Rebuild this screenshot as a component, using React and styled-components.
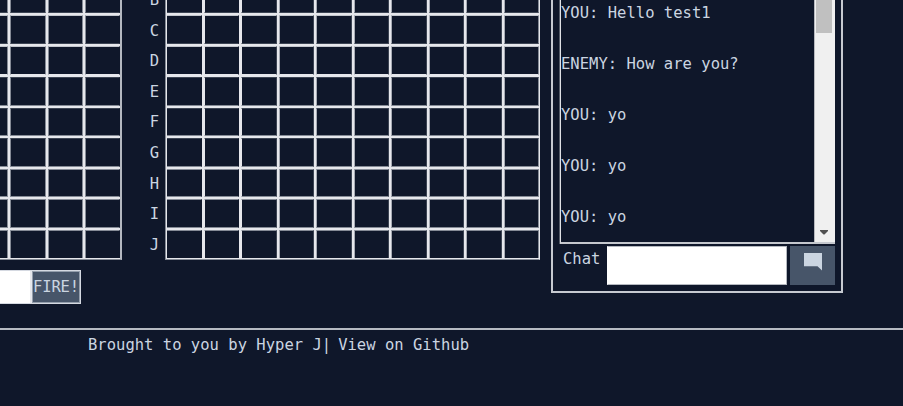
import React from "react";
import styled, { createGlobalStyle } from "styled-components";

const line = "#e6e7ec";
const bright = "#c3c6cd";
const soft = "#858b96";
const faint = "#3c4453";
const night = "#0f172a";

const GlobalStyle = createGlobalStyle`
  * { box-sizing: border-box; }
  body { margin: 0; background: ${night}; overflow: hidden; }
`;

const Page = styled.div`
  width: 903px;
  height: 406px;
  overflow: hidden;
  background: ${night};
  color: #cbd5e1;
  font: 15.5px/26px "DejaVu Sans Mono", monospace;
  letter-spacing: 0.02px;
  display: flex;
  flex-direction: column;
`;

const Game = styled.main`
  height: 328px;
  display: flex;
  align-items: flex-start;
`;

const OwnSide = styled.section`
  width: 122px;
`;

const Board = styled.div`
  display: grid;
  grid-template-columns: ${(p) => p.$columns.join("px ")}px;
  grid-template-rows: 13px 29px 29px 29px 28px 29px 28px 29px 28px;
  gap: 2px;
  width: ${(p) => p.$width}px;
  height: 260px;
  padding-bottom: 1px;
  background: ${line};
  border-right: 2px solid #b4b8c0;
  border-bottom: 1px solid ${soft};
`;

const Cell = styled.div`
  background: ${night};
  border: 0 solid;
  border-width: ${(p) => `${p.$first ? 0 : 1}px 1px ${p.$last ? 0 : 1}px ${p.$start ? 0 : 1}px`};
  border-top-color: ${(p) => p.$top};
  border-bottom-color: ${(p) => p.$bottom};
  border-right-color: ${(p) => p.$right};
  border-left-color: ${(p) => p.$left};
`;

const FireBar = styled.form`
  display: flex;
  width: 81px;
  height: 34px;
  margin-top: 10px;
  border: 1px solid #d5d9e1;
  border-left: 0;
`;

const TargetInput = styled.div`
  width: 32px;
  background: #fff;
  border-right: 2px solid ${line};
`;

const FireButton = styled.button`
  width: 48px;
  padding: 0;
  border: 1px solid #949eac;
  background: #475569;
  color: #cbd5e1;
  font: inherit;
  line-height: 28px;
  letter-spacing: -0.15px;
`;

const Letters = styled.div`
  width: 43px;
  padding-right: 6px;
  margin-top: -15px;
  display: flex;
  flex-direction: column;
  align-items: flex-end;
`;

const Letter = styled.span`
  height: 30.6px;
  line-height: 30.6px;
`;

const Chat = styled.aside`
  width: 292px;
  height: 293px;
  margin-left: 11px;
  padding: 0 6px 0 7px;
  border: solid #c6cad1;
  border-width: 0 2px 2px 2px;
`;

const Log = styled.div`
  display: flex;
  height: 244px;
  width: 275px;
  border-left: 1px solid #e0e1e5;
  border-bottom: 2px solid #c5c8ce;
  box-shadow: -1px 0 0 #555c69;
`;

const Messages = styled.div`
  flex: 1;
`;

const Message = styled.p`
  margin: 0;
  height: 51px;
`;

const Scrollbar = styled.div`
  width: 21px;
  padding-right: 2px;
  background: #f0f0f0;
  border-left: 1px solid #b8babf;
  display: flex;
  flex-direction: column;
  justify-content: space-between;
  align-items: center;
`;

const Thumb = styled.div`
  width: 16px;
  height: 33px;
  background: #c0c0c0;
`;

const Arrow = styled.svg`
  display: block;
  width: 8px;
  height: 5px;
  margin-bottom: 7px;
`;

const Composer = styled.div`
  display: flex;
  align-items: flex-start;
  height: 39px;
  margin-top: 2px;
  padding-left: 3px;
`;

const ChatLabel = styled.label`
  width: 44px;
  line-height: 26px;
`;

const ChatInput = styled.div`
  width: 180px;
  height: 39px;
  background: #fff;
  border: 1px solid #b4b8bf;
  border-left-color: #fff;
`;

const SendButton = styled.button`
  display: flex;
  align-items: flex-start;
  width: 45px;
  height: 39px;
  margin-left: 3px;
  padding: 7px 0 0 14px;
  border: 0;
  background: #475569;
`;

const Footer = styled.footer`
  height: 78px;
  border-top: 2px solid #b6bac2;
  padding: 2px 0 0 88px;
  white-space: pre;
`;

const FooterLink = styled.a`
  margin-left: 7px;
`;

const ownColumns = [8, 36, 35, 35];
const enemyColumns = [35, 35, 36, 35, 36, 35, 36, 35, 36, 35];
const rowEdges = [
  [night, faint],
  [bright, faint],
  [bright, line],
  [faint, soft],
  [faint, soft],
  [faint, soft],
  [soft, soft],
  [soft, soft],
  [soft, night],
];

function Grid({ columns, width, wide, className }) {
  return (
    <Board $columns={columns} $width={width} className={className}>
      {rowEdges.map(([top, bottom], row) =>
        columns.map((_, col) => (
          <Cell
            key={`${row}-${col}`}
            $top={top}
            $bottom={bottom}
            $first={row === 0}
            $last={row === rowEdges.length - 1}
            $start={col === 0}
            $left={!wide ? soft : col < 3 ? line : "#a6aab3"}
            $right={!wide ? (col === 3 ? night : soft) : col === 9 ? soft : col < 2 ? night : faint}
          />
        ))
      )}
    </Board>
  );
}

const EnemyGrid = styled(Grid)`
  padding-left: 1px;
  border-left: 1px solid ${soft};
  border-right: 1px solid ${line};
`;

const messages = ["YOU: Hello test1", "ENEMY: How are you?", "YOU: yo", "YOU: yo", "YOU: yo"];

export default function App() {
  return (
    <Page>
      <GlobalStyle />
      <Game>
        <OwnSide>
          <Grid columns={ownColumns} width={122} />
          <FireBar>
            <TargetInput />
            <FireButton type="button">FIRE!</FireButton>
          </FireBar>
        </OwnSide>
        <Letters>
          {[..."BCDEFGHIJ"].map((l) => <Letter key={l}>{l}</Letter>)}
        </Letters>
        <EnemyGrid columns={enemyColumns} width={375} wide />
        <Chat>
          <Log>
            <Messages>
              {messages.map((m, i) => <Message key={i}>{m}</Message>)}
            </Messages>
            <Scrollbar>
              <Thumb />
              <Arrow viewBox="0 0 8 5"><path d="M0 0H8V1L4.5 4.5H3.5L0 1Z" fill="#505050" /></Arrow>
            </Scrollbar>
          </Log>
          <Composer>
            <ChatLabel>Chat</ChatLabel>
            <ChatInput />
            <SendButton type="button" aria-label="Send">
              <svg width="18" height="18" viewBox="0 0 18 18"><path d="M0 0H18V17.5L13.5 13.3H0Z" fill="#cbd5e1" /></svg>
            </SendButton>
          </Composer>
        </Chat>
      </Game>
      <Footer>Brought to you by Hyper J|<FooterLink>View on Github</FooterLink></Footer>
    </Page>
  );
}
